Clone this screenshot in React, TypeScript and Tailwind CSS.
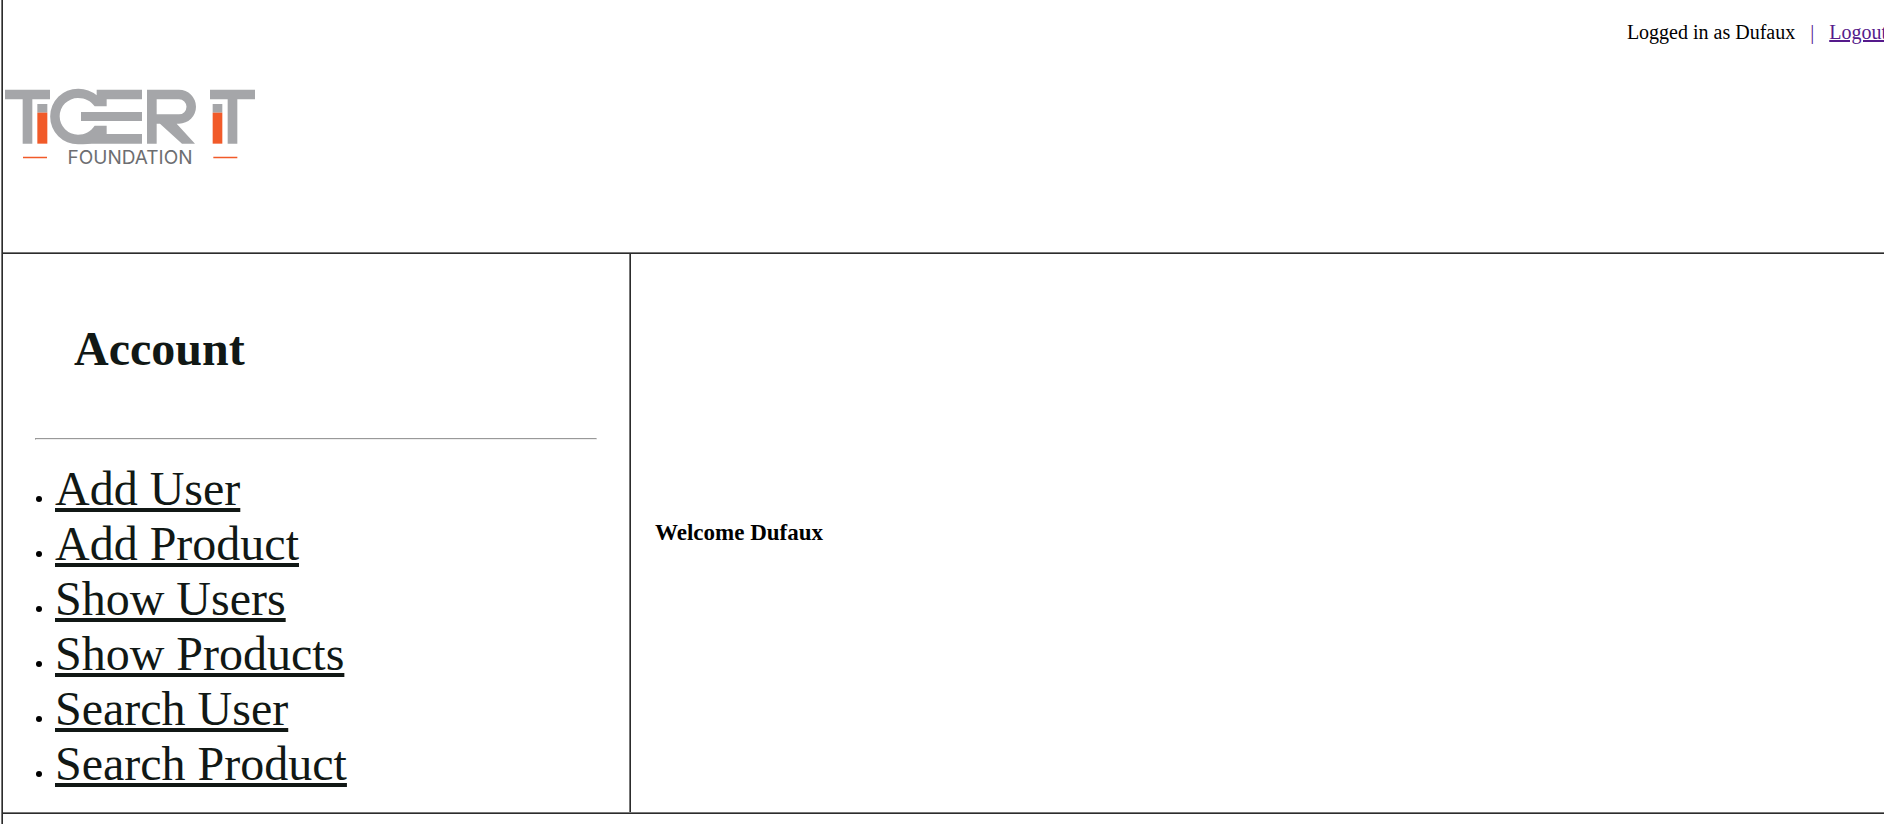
const links = ["Add User", "Add Product", "Show Users", "Show Products", "Search User", "Search Product"];

function Logo() {
  return (
    <svg viewBox="0 0 250 88" className="block h-[88px] w-[250px]" role="img" aria-label="Tiger IT Foundation">
      <g transform="scale(0.33333) translate(-15 -50)">
        <g fill="#a5a6a9">
          <path d="M15 58H150V87H97V220H68V87H15Z" />
          <path d="M112 101H142V127H112Z" />
          <path d="M630 58H765V87H712V220H683V87H630Z" />
          <path d="M638 101H667V127H638Z" />
          <path d="M426 58H290V75A84 84 0 0 0 234 55A83.500 83.500 0 0 0 234 222C256 222 270 220 290 220H426V191H320V166H284C272 184 254 193 234 193A55 55 0 0 1 234 83C256 83 272 92 284 108H320V87H426Z" />
          <path d="M243 125H426V152H243Z" />
          <path
            fillRule="evenodd"
            d="M441 58H537A51 51 0 0 1 537 160H530L585 220H546L480 160H470V220H441ZM470 87V132H537A22.5 22.5 0 0 0 537 87Z"
          />
        </g>
        <g fill="#f15a29">
          <path d="M112 127H142V220H112Z" />
          <path d="M638 127H667V220H638Z" />
          <path d="M69 259H141V264H69ZM640 259H712V264H640Z" />
        </g>
      </g>
      <text x="125" y="77" textAnchor="middle" fill="#6d6e71" className="font-['Inter',sans-serif] text-[19px]">
        FOUNDATION
      </text>
    </svg>
  );
}

export default function App() {
  return (
    <div className="min-h-screen overflow-hidden bg-white pl-px font-['Liberation_Serif',serif] text-black">
      <div className="flex min-h-screen flex-col border-l border-[#777777]">
        <div className="flex grow flex-col border-l border-[#2c2c2c]">
          <header className="-mr-[3px] flex h-[252px] items-start justify-between pl-[2px]">
            <div className="pt-[87px]">
              <Logo />
            </div>
            <div className="flex gap-[15px] pt-[21px] text-[20px] leading-[23px]">
              <span>Logged in as Dufaux</span>
              <span className="text-[#551a8b]">|</span>
              <a href="#logout" className="text-[#551a8b] underline">Logout</a>
            </div>
          </header>
          <div className="border-y border-t-[#777777] border-b-[#2c2c2c]">
            <div className="flex border-y border-t-[#2c2c2c] border-b-[#777777]">
              <nav className="w-1/3 border-r border-[#777777] px-8 pt-[67px] pb-[21px] text-[#111815]">
                <h1 className="pl-[39px] text-[48px] leading-[55px] font-bold">Account</h1>
                <hr className="mt-[62px] mb-[21px] h-[2px] border border-t-[#999999] border-r-[#eeeeee] border-b-[#eeeeee] border-l-[#999999]" />
                <ul className="list-outside list-disc pl-5 text-[20px] marker:text-black">
                  {links.map((label) => (
                    <li key={label} className="leading-none">
                      <a
                        href={"#" + label.toLowerCase().replace(" ", "-")}
                        className="text-[48px] leading-[55px] underline"
                      >
                        {label}
                      </a>
                    </li>
                  ))}
                </ul>
              </nav>
              <main className="flex grow items-center border-l border-[#2c2c2c] px-6">
                <h2 className="text-[23px] leading-[26px] font-bold">Welcome Dufaux</h2>
              </main>
            </div>
          </div>
        </div>
      </div>
    </div>
  );
}
